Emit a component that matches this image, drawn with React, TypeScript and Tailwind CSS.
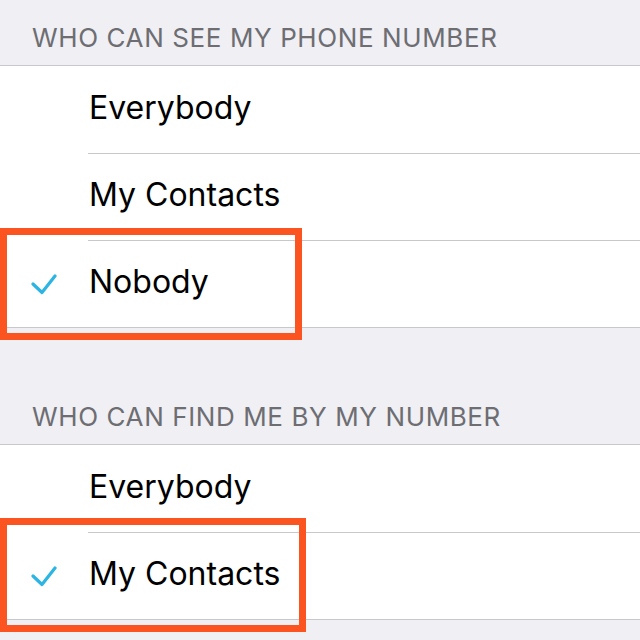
const Check = () => (
  <svg width="26" height="22" viewBox="0 0 26 22" className="absolute left-[31px] top-1/2 -translate-y-1/2">
    <polyline
      points="2,11 11,19.5 24,3"
      fill="none"
      stroke="#2cb4e2"
      strokeWidth="3.2"
      strokeLinecap="round"
      strokeLinejoin="round"
    />
  </svg>
);

type Row = { label: string; checked?: boolean; box?: string };

function Section({ title, rows, headH }: { title: string; rows: Row[]; headH: string }) {
  return (
    <div>
      <div className={`${headH} flex items-end px-[32px] pb-[12px] text-[26px] leading-[30px] tracking-[0.6px] text-[#6d6d72]`}>
        {title}
      </div>
      <div className="bg-white border-y border-[#c8c7cc]">
        {rows.map((r, i) => (
          <div key={r.label} className="relative h-[87px]">
            {i > 0 && <div className="absolute left-[88px] right-0 top-0 h-px bg-[#c8c7cc]" />}
            <div className="flex h-full items-center pl-[89px] pb-[3px] text-[32px] text-black">{r.label}</div>
            {r.checked && <Check />}
            {r.box && <div className={`absolute left-0 border-[7px] border-[#fb5420] ${r.box}`} />}
          </div>
        ))}
      </div>
    </div>
  );
}

export default function App() {
  return (
    <div className="w-[640px] h-[640px] overflow-hidden bg-[#efeff4] font-['Inter',sans-serif]">
      <Section
        title="WHO CAN SEE MY PHONE NUMBER"
        headH="h-[65px]"
        rows={[
          { label: 'Everybody' },
          { label: 'My Contacts' },
          { label: 'Nobody', checked: true, box: 'top-[-12px] w-[302px] h-[112px]' },
        ]}
      />
      <Section
        title="WHO CAN FIND ME BY MY NUMBER"
        headH="h-[116px]"
        rows={[
          { label: 'Everybody' },
          { label: 'My Contacts', checked: true, box: 'top-[-14px] w-[306px] h-[114px]' },
        ]}
      />
    </div>
  );
}
